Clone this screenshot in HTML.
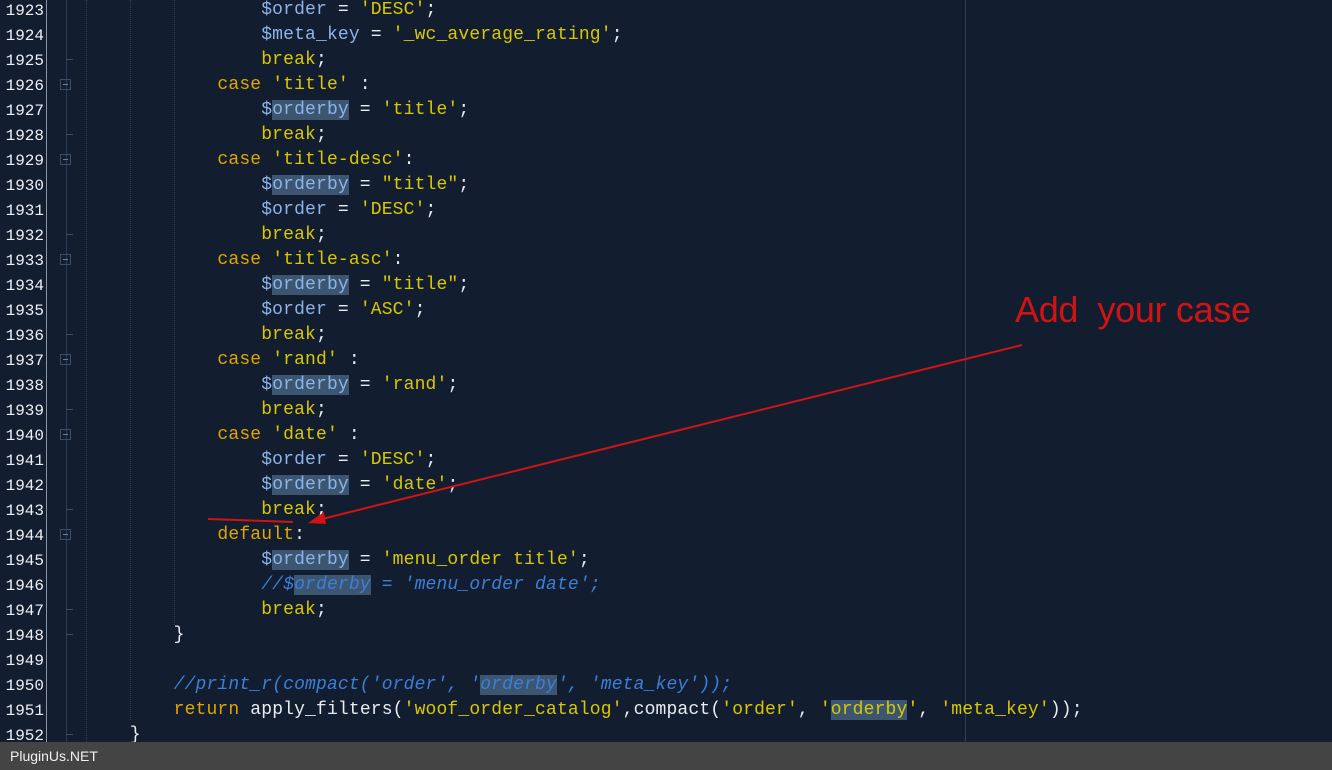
<!DOCTYPE html><html><head><meta charset="utf-8"><style>
body{margin:0;width:1332px;height:770px;overflow:hidden;background:#131d30;position:relative;font-family:"Liberation Mono",monospace}
.ln{position:absolute;left:0;width:44px;text-align:right;color:#eef0f4;font-size:16px}
.code{position:absolute;left:86px;white-space:pre;font-size:18px;color:#e8ecf0;letter-spacing:0.15px}
.k{color:#e0a600}.s{color:#d8c800}.v{color:#8cb4e8}.h{background:#3c5672}.c{color:#3c7fd8;font-style:italic}
.g{position:absolute;top:0;height:742px;border-left:1px dotted #2e4058}
.fb{position:absolute;left:60px;width:11px;height:11px;border:1px solid #3a4e68;box-sizing:border-box}
.fb:after{content:"";position:absolute;left:2px;top:4px;width:5px;height:1px;background:#6a7f98}
.tk{position:absolute;left:66px;width:7px;height:1px;background:#3a4e68}
</style></head><body>
<div style="position:absolute;left:46px;top:0;width:1px;height:742px;background:#8a96a4"></div>
<div style="position:absolute;left:66px;top:0;width:1px;height:742px;background:#2a3c55"></div>
<div style="position:absolute;left:965px;top:0;width:1px;height:742px;background:#2e4058"></div>
<div class="g" style="left:86px"></div><div class="g" style="left:130px;height:720px"></div><div class="g" style="left:174px;height:625px"></div>
<div id="L"></div>
<script>
const lines=[
['<span class="v">$order</span> = <span class="s">\'DESC\'</span>;',16],
['<span class="v">$meta_key</span> = <span class="s">\'_wc_average_rating\'</span>;',16],
['<span class="s">break</span>;',16],
['<span class="k">case</span> <span class="s">\'title\'</span> :',12],
['<span class="v">$<span class="h">orderby</span></span> = <span class="s">\'title\'</span>;',16],
['<span class="s">break</span>;',16],
['<span class="k">case</span> <span class="s">\'title-desc\'</span>:',12],
['<span class="v">$<span class="h">orderby</span></span> = <span class="s">"title"</span>;',16],
['<span class="v">$order</span> = <span class="s">\'DESC\'</span>;',16],
['<span class="s">break</span>;',16],
['<span class="k">case</span> <span class="s">\'title-asc\'</span>:',12],
['<span class="v">$<span class="h">orderby</span></span> = <span class="s">"title"</span>;',16],
['<span class="v">$order</span> = <span class="s">\'ASC\'</span>;',16],
['<span class="s">break</span>;',16],
['<span class="k">case</span> <span class="s">\'rand\'</span> :',12],
['<span class="v">$<span class="h">orderby</span></span> = <span class="s">\'rand\'</span>;',16],
['<span class="s">break</span>;',16],
['<span class="k">case</span> <span class="s">\'date\'</span> :',12],
['<span class="v">$order</span> = <span class="s">\'DESC\'</span>;',16],
['<span class="v">$<span class="h">orderby</span></span> = <span class="s">\'date\'</span>;',16],
['<span class="s">break</span>;',16],
['<span class="k">default</span>:',12],
['<span class="v">$<span class="h">orderby</span></span> = <span class="s">\'menu_order title\'</span>;',16],
['<span class="c">//$<span class="h">orderby</span> = \'menu_order date\';</span>',16],
['<span class="s">break</span>;',16],
['}',8],
['',0],
['<span class="c">//print_r(compact(\'order\', \'<span class="h">orderby</span>\', \'meta_key\'));</span>',8],
['<span class="k">return</span> apply_filters(<span class="s">\'woof_order_catalog\'</span>,compact(<span class="s">\'order\'</span>, <span class="s">\'<span class="h">orderby</span>\'</span>, <span class="s">\'meta_key\'</span>));',8],
['}',4]];
let h='';const folds=[3,6,10,14,17,21],ticks=[2,5,9,13,16,20,24,25,29];
lines.forEach((l,i)=>{const t=-2+25*i;
h+=`<div class="ln" style="top:${t+1}px;line-height:25px">${1923+i}</div>`;
h+=`<div class="code" style="top:${t}px;line-height:25px">${' '.repeat(l[1])}${l[0]}</div>`;
if(folds.includes(i))h+=`<div class="fb" style="top:${t+6}px"></div>`;
if(ticks.includes(i))h+=`<div class="tk" style="top:${t+11}px"></div>`;});
document.getElementById('L').innerHTML=h;
</script>
<svg style="position:absolute;left:0;top:0" width="1332" height="770">
<line x1="1022" y1="345" x2="318" y2="520" stroke="#d01414" stroke-width="2"/>
<polygon points="308,523 324,512 326,524" fill="#d01414"/>
<line x1="208" y1="519" x2="293" y2="522" stroke="#d01414" stroke-width="2"/>
<text x="1015" y="322" font-family="Liberation Sans,sans-serif" font-size="36" fill="#d01414" xml:space="preserve" textLength="236">Add  your case</text>
</svg>
<div style="position:absolute;left:0;top:742px;width:1332px;height:28px;background:#444;color:#f0f0f0;font:14px 'Liberation Sans',sans-serif;line-height:28px;padding-left:10px;box-sizing:border-box">PluginUs.NET</div>
</body></html>
